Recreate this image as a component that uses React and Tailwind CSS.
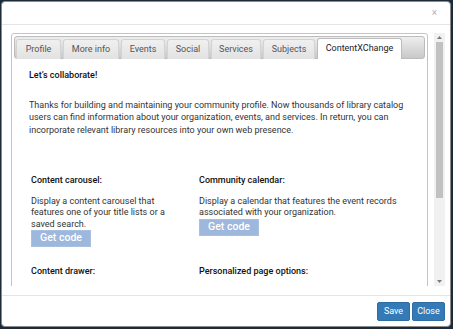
import React from "react";

const tabs = [
  { label: "Profile", w: "w-[45px]" },
  { label: "More info", w: "w-[56px]" },
  { label: "Events", w: "w-[44px]" },
  { label: "Social", w: "w-[42px]" },
  { label: "Services", w: "w-[50px]" },
  { label: "Subjects", w: "w-[52px]" },
];

export default function App() {
  return (
    <div className="w-[453px] h-[329px] bg-[#1d2b39] pl-px pt-px overflow-hidden font-['Roboto',sans-serif]">
      <div className="w-[450px] h-[326px] bg-white rounded-[4px] border border-[#8a8a8a] flex flex-col overflow-hidden">
        {/* header */}
        <div className="h-[23px] shrink-0 border-b border-[#e5e5e5] flex justify-end items-center pr-[13px]">
          <span className="text-[10px] leading-none text-[#b5b5b5]">×</span>
        </div>
        {/* body */}
        <div className="flex-1 min-h-0 pl-[9px] pr-[5px] pt-[8px] pb-[9px] flex">
          <div className="flex-1 min-h-0 overflow-hidden flex gap-[6px]">
            <div className="flex-1 border border-[#c4c4c4] rounded-[3px] p-[2px] self-start h-[300px]">
              <div className="h-[23px] rounded-[3px] border border-[#bcbcbc] bg-gradient-to-b from-[#eeeeee] to-[#c9c9c9] flex items-end gap-[2px] pl-px">
                {tabs.map((t) => (
                  <div
                    key={t.label}
                    className={`${t.w} h-[20px] -mb-px border border-[#d3d3d3] border-b-0 rounded-t-[3px] bg-gradient-to-b from-[#f0f0f0] to-[#e2e2e2] flex items-center justify-center text-[9px] text-[#555]`}
                  >
                    {t.label}
                  </div>
                ))}
                <div className="w-[85px] h-[21px] -mb-px border border-[#bcbcbc] border-b-0 rounded-t-[3px] bg-white flex items-center justify-center text-[9px] text-[#222]">
                  ContentXChange
                </div>
              </div>
              <div className="pl-[15px] pr-[10px] pt-[10px] text-[9px] leading-[12.5px] text-[#333]">
                <div className="font-medium text-[#111]">Let’s collaborate!</div>
                <p className="mt-[17px] w-[380px]">
                  Thanks for building and maintaining your community profile. Now thousands of library catalog users can find information about your organization, events, and services. In return, you can incorporate relevant library resources into your own web presence.
                </p>
                <div className="mt-[38px] flex pl-[2px]">
                  <div className="w-[168px]">
                    <div className="font-medium text-[#111]">Content carousel:</div>
                    <p className="mt-[9px] w-[150px] leading-[11.5px]">
                      Display a content carousel that features one of your title lists or a saved search.
                    </p>
                    <button className="mt-0 w-[60px] h-[17px] bg-[#9db8dc] border border-[#a9c1e0] text-white text-[10.5px] font-medium leading-none">
                      Get code
                    </button>
                    <div className="mt-[18px] font-medium text-[#111]">Content drawer:</div>
                  </div>
                  <div className="w-[205px]">
                    <div className="font-medium text-[#111]">Community calendar:</div>
                    <p className="mt-[9px] leading-[11.5px]">
                      Display a calendar that features the event records associated with your organization.
                    </p>
                    <button className="w-[60px] h-[17px] bg-[#9db8dc] border border-[#a9c1e0] text-white text-[10.5px] font-medium leading-none">
                      Get code
                    </button>
                    <div className="mt-[29px] font-medium text-[#111]">Personalized page options:</div>
                  </div>
                </div>
              </div>
            </div>
            {/* scrollbar */}
            <div className="w-[11px] bg-[#f1f1f1] flex flex-col items-center">
              <div className="h-[9px] flex items-center justify-center">
                <svg width="5" height="3" viewBox="0 0 5 3"><path d="M0 3 L2.5 0 L5 3 Z" fill="#7a7a7a" /></svg>
              </div>
              <div className="w-[7px] h-[156px] bg-[#c1c1c1]" />
              <div className="flex-1" />
              <div className="h-[9px] flex items-center justify-center">
                <svg width="5" height="3" viewBox="0 0 5 3"><path d="M0 0 L5 0 L2.5 3 Z" fill="#7a7a7a" /></svg>
              </div>
            </div>
          </div>
        </div>
        {/* footer */}
        <div className="h-[31px] shrink-0 border-t border-[#e5e5e5] flex justify-end items-start pt-[6px] pr-[5px] gap-[2px]">
          <button className="w-[33px] h-[19px] rounded-[2px] bg-[#337ab7] border border-[#2e6da4] text-white text-[9px] leading-none">Save</button>
          <button className="w-[33px] h-[19px] rounded-[2px] bg-[#337ab7] border border-[#2e6da4] text-white text-[9px] leading-none">Close</button>
        </div>
      </div>
    </div>
  );
}
